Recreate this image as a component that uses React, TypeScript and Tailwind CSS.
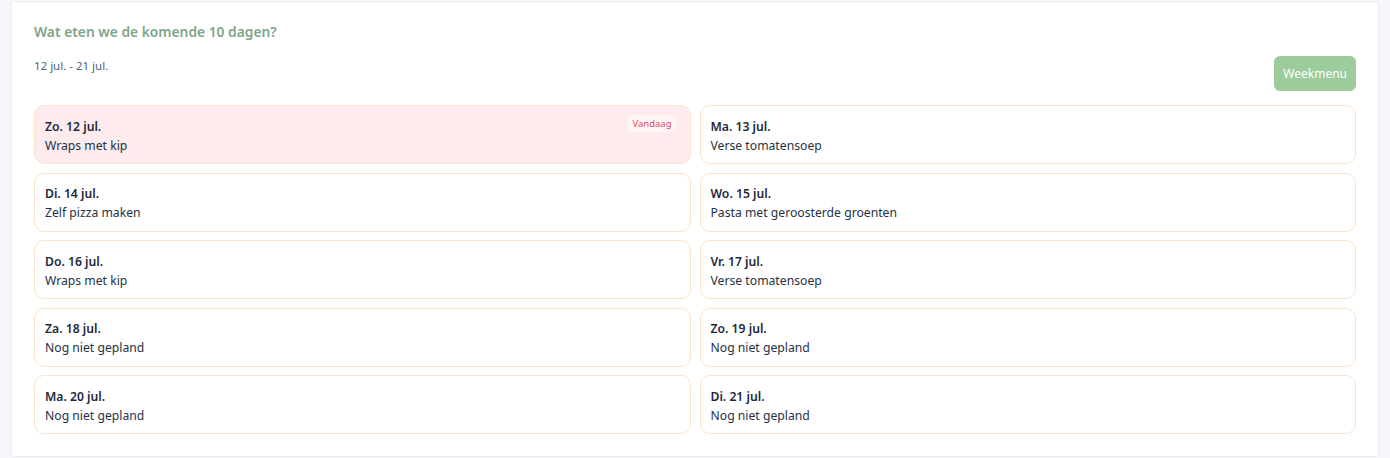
import React from "react";

type Day = {
  label: string;
  meal: string;
  today?: boolean;
};

const days: Day[] = [
  { label: "Zo. 12 jul.", meal: "Wraps met kip", today: true },
  { label: "Ma. 13 jul.", meal: "Verse tomatensoep" },
  { label: "Di. 14 jul.", meal: "Zelf pizza maken" },
  { label: "Wo. 15 jul.", meal: "Pasta met geroosterde groenten" },
  { label: "Do. 16 jul.", meal: "Wraps met kip" },
  { label: "Vr. 17 jul.", meal: "Verse tomatensoep" },
  { label: "Za. 18 jul.", meal: "Nog niet gepland" },
  { label: "Zo. 19 jul.", meal: "Nog niet gepland" },
  { label: "Ma. 20 jul.", meal: "Nog niet gepland" },
  { label: "Di. 21 jul.", meal: "Nog niet gepland" },
];

const DayCard: React.FC<{ day: Day }> = ({ day }) => {
  return (
    <div
      className={
        day.today
          ? "h-[59px] rounded-[10px] border border-[#fde4cc] bg-[#fdebed] px-[10px] pt-[2px] flex flex-col justify-center"
          : "h-[59px] rounded-[10px] border border-[#fde4cc] bg-white px-[10px] pt-[2px] flex flex-col justify-center"
      }
    >
      <div className="flex items-start justify-between">
        <span className="text-[12.2px] leading-[19px] font-semibold text-[#1e293b]">
          {day.label}
        </span>
        {day.today && (
          <span className="mt-[-2px] mr-[3px] rounded-full bg-[#fff5f6] px-[5px] text-[9.5px] leading-[17px] text-[#df4b68]">
            Vandaag
          </span>
        )}
      </div>
      <span className="text-[12.2px] leading-[19px] text-[#253245]">{day.meal}</span>
    </div>
  );
};

export default function App() {
  return (
    <div
      className="min-h-[458px] bg-[#f5f7fb] pl-[11px] pr-[11px] pt-px"
      style={{ fontFamily: "'Noto Sans', 'Open Sans', sans-serif" }}
    >
      {/* Panel */}
      <div className="rounded-[2px] border border-[#e9ecf2] bg-white px-[22px] pt-[20px] pb-[22px]">
        <h2 className="text-[13.8px] leading-[20px] font-semibold text-[#7ea58a]">
          Wat eten we de komende 10 dagen?
        </h2>
        <div className="mt-[14px] flex items-start justify-between">
          <span className="pt-[2px] text-[11.5px] leading-[16px] text-[#4f5f7c]">
            12 jul. - 21 jul.
          </span>
          <button className="h-[35px] rounded-[6px] bg-[#9ccc9c] px-[9px] text-[12px] text-white">
            Weekmenu
          </button>
        </div>

        {/* Days grid */}
        <div className="mt-[14px] grid grid-cols-2 gap-x-[9px] gap-y-[8.5px]">
          {days.map((d) => (
            <DayCard key={d.label} day={d} />
          ))}
        </div>
      </div>
    </div>
  );
}
